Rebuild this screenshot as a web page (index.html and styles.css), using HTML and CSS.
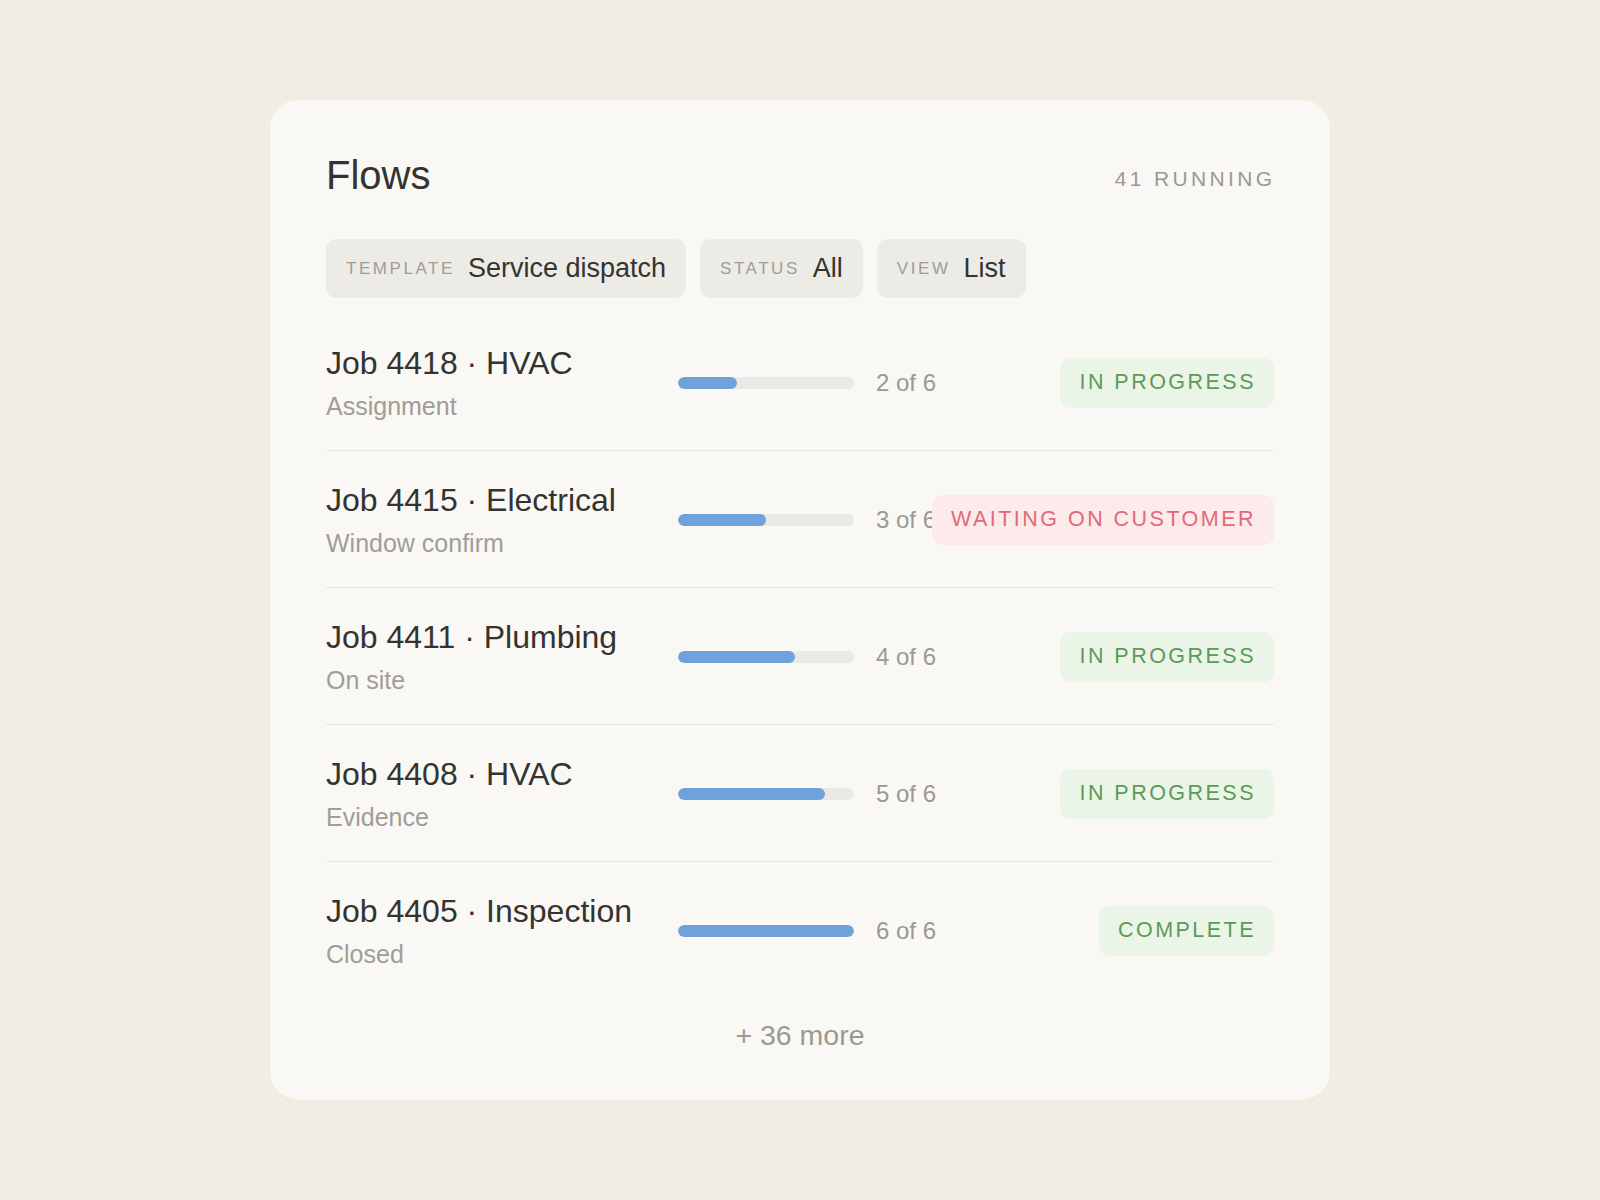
FILE: index.html
```html
<!DOCTYPE html>
<html lang="en">
<head>
<meta charset="utf-8">
<title>Flows</title>
<link rel="stylesheet" href="styles.css">
</head>
<body>
<main class="card">
  <header class="card-head">
    <h1 class="title">Flows</h1>
    <span class="running">41 RUNNING</span>
  </header>

  <div class="filters">
    <div class="chip"><span class="chip-label">TEMPLATE</span><span class="chip-value">Service dispatch</span></div>
    <div class="chip"><span class="chip-label">STATUS</span><span class="chip-value">All</span></div>
    <div class="chip"><span class="chip-label">VIEW</span><span class="chip-value">List</span></div>
  </div>

  <ul class="list">
    <li class="row">
      <div class="job"><div class="job-name">Job 4418 · HVAC</div><div class="job-step">Assignment</div></div>
      <div class="bar"><div class="bar-fill" style="width: 33.33%"></div></div>
      <div class="count">2 of 6</div>
      <div class="status"><span class="badge badge-green">IN PROGRESS</span></div>
    </li>
    <li class="row">
      <div class="job"><div class="job-name">Job 4415 · Electrical</div><div class="job-step">Window confirm</div></div>
      <div class="bar"><div class="bar-fill" style="width: 50%"></div></div>
      <div class="count">3 of 6</div>
      <div class="status"><span class="badge badge-red">WAITING ON CUSTOMER</span></div>
    </li>
    <li class="row">
      <div class="job"><div class="job-name">Job 4411 · Plumbing</div><div class="job-step">On site</div></div>
      <div class="bar"><div class="bar-fill" style="width: 66.67%"></div></div>
      <div class="count">4 of 6</div>
      <div class="status"><span class="badge badge-green">IN PROGRESS</span></div>
    </li>
    <li class="row">
      <div class="job"><div class="job-name">Job 4408 · HVAC</div><div class="job-step">Evidence</div></div>
      <div class="bar"><div class="bar-fill" style="width: 83.33%"></div></div>
      <div class="count">5 of 6</div>
      <div class="status"><span class="badge badge-green">IN PROGRESS</span></div>
    </li>
    <li class="row">
      <div class="job"><div class="job-name">Job 4405 · Inspection</div><div class="job-step">Closed</div></div>
      <div class="bar"><div class="bar-fill" style="width: 100%"></div></div>
      <div class="count">6 of 6</div>
      <div class="status"><span class="badge badge-green">COMPLETE</span></div>
    </li>
  </ul>

  <div class="more">+ 36 more</div>
</main>
</body>
</html>
```

FILE: styles.css
```css
* { box-sizing: border-box; }

html, body {
  margin: 0;
  padding: 0;
}

body {
  background: #f2ede2;
  font-family: "Liberation Sans", Arial, sans-serif;
  color: #34332f;
}

.card {
  width: 1060px;
  margin: 100px auto 0;
  background: #f9f8f4;
  border-radius: 28px;
  padding: 54px 56px 47px;
  box-shadow: 0 1px 2px rgba(120, 110, 90, 0.06);
}

.card-head {
  display: flex;
  justify-content: space-between;
  align-items: flex-start;
}

.title {
  margin: 0;
  font-size: 40px;
  line-height: 42px;
  font-weight: 400;
  color: #34332f;
}

.running {
  margin-top: 13px;
  margin-right: -1.5px;
  font-size: 21px;
  line-height: 24px;
  letter-spacing: 0.16em;
  color: #9c9991;
}

.filters {
  display: flex;
  gap: 14px;
  margin-top: 43px;
}

.chip {
  display: flex;
  align-items: center;
  gap: 13px;
  height: 59px;
  padding: 0 20px;
  background: #ecebe6;
  border-radius: 11px;
}

.chip-label {
  font-size: 17px;
  letter-spacing: 0.15em;
  color: #a09d96;
}

.chip-value {
  font-size: 27px;
  color: #34332f;
}

.list {
  list-style: none;
  margin: 16px 0 0;
  padding: 0;
}

.row {
  display: grid;
  grid-template-columns: 330px 176px 1fr 210px;
  column-gap: 22px;
  align-items: center;
  padding: 30px 0 29px;
}

.row + .row {
  border-top: 1px solid #e7e5e0;
}

.job-name {
  font-size: 32px;
  line-height: 38px;
  color: #34332f;
  white-space: nowrap;
}

.job-step {
  margin-top: 9px;
  font-size: 25px;
  line-height: 30px;
  color: #a09d96;
}

.bar {
  height: 12px;
  border-radius: 6px;
  background: #ebe9e5;
  overflow: hidden;
}

.bar-fill {
  height: 100%;
  border-radius: 6px;
  background: #6fa2dd;
}

.count {
  font-size: 24px;
  color: #9c9991;
  white-space: nowrap;
}

.status {
  display: flex;
  justify-content: flex-end;
}

.badge {
  display: flex;
  align-items: center;
  height: 50px;
  padding: 0 18px 1px 19px;
  border-radius: 10px;
  font-size: 21.5px;
  letter-spacing: 0.115em;
  white-space: nowrap;
}

.badge-green {
  background: #ebf5e7;
  color: #5c9a58;
}

.badge-red {
  background: #fdeaea;
  color: #e2697b;
}

.more {
  padding-top: 19px;
  text-align: center;
  font-size: 28.5px;
  line-height: 36px;
  color: #9c9991;
}
```
